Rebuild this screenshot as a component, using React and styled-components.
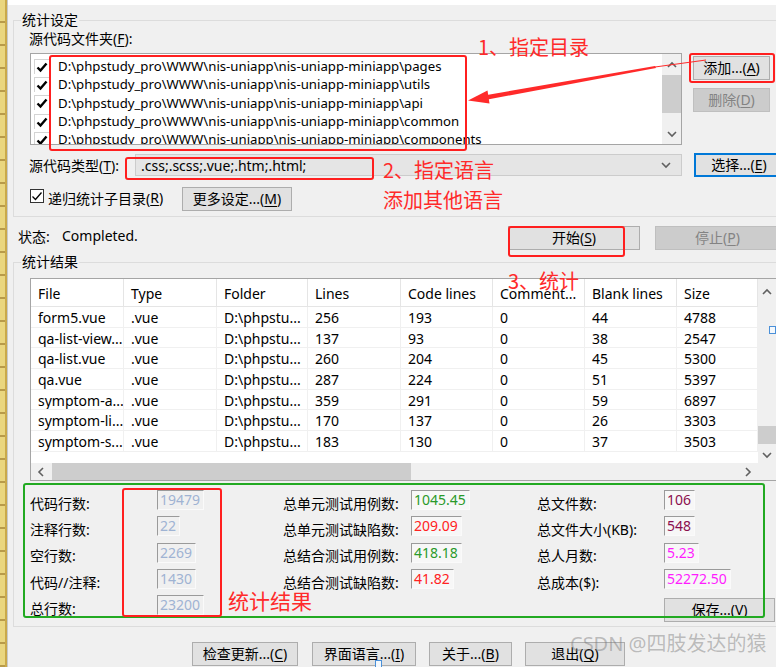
import React from 'react';
import styled, { createGlobalStyle } from 'styled-components';

const GlobalStyle = createGlobalStyle`
  html, body { margin: 0; padding: 0; background: #f0f0f0; }
  body {
    font-family: "Noto Sans", "Noto Sans CJK SC", sans-serif;
    font-size: 14px;
    color: #000;
  }
  * { box-sizing: border-box; }
`;

const Page = styled.div`
  position: relative;
  width: 776px;
  height: 667px;
  overflow: hidden;
  display: flex;
`;

const Strip = styled.div`
  flex: none;
  width: 8px;
  border-right: 1px solid #c8c8c8;
  background:
    linear-gradient(to right, transparent 0 5px, #c9a94b 5px 7px),
    repeating-linear-gradient(to bottom, #ead67f 0 21px, #b89a4a 21px 23px);
`;

const Window = styled.div`
  flex: 1;
  min-width: 0;
  display: flex;
  flex-direction: column;
  background: #f0f0f0;
`;

const TopBar = styled.div`
  flex: none;
  height: 5px;
  background: #fff;
`;

const GroupBox = styled.div`
  display: flex;
  flex-direction: column;
  margin: ${p => p.$top}px -40px 0 5px;
  padding: 0 0 ${p => p.$bottom}px 16px;
  border: 1px solid #dcdcdc;
`;

const GroupTitle = styled.div`
  align-self: flex-start;
  margin: -9px 0 0 -9px;
  padding: 0 1px;
  height: 16px;
  line-height: 16px;
  background: #f0f0f0;
`;

const FieldLabel = styled.div`
  margin: 2px 0 0 -1px;
  height: 18px;
  line-height: 18px;
`;

const Key = styled.span`
  text-decoration: underline;
  text-underline-offset: 2px;
`;

const ListRow = styled.div`
  display: flex;
  align-items: flex-start;
  margin-top: 5px;
`;

const ListBox = styled.div`
  flex: none;
  display: flex;
  width: 652px;
  height: 92px;
  background: #fff;
  border: 1px solid #a5a5a5;
`;

const ListItems = styled.div`
  flex: 1;
  overflow: hidden;
  padding: 3px 0 0 3px;
`;

const ListItem = styled.div`
  display: flex;
  align-items: center;
  height: 18.3px;
  font-size: 13.2px;
  white-space: nowrap;
`;

const Tick = styled.span`
  flex: none;
  display: flex;
  align-items: center;
  justify-content: center;
  width: 15px;
  height: 15px;
  margin-right: 9px;
  border-left: 1px solid #d4d4d4;
  border-top: 1px solid #d4d4d4;
`;

const VBar = styled.div`
  flex: none;
  display: flex;
  flex-direction: column;
  width: ${p => p.$w}px;
  padding-top: ${p => p.$pt || 0}px;
  background: #f0f0f0;
`;

const HBar = styled.div`
  display: flex;
  align-items: stretch;
  background: #f0f0f0;
`;

const Arrow = styled.div`
  flex: none;
  display: flex;
  align-items: center;
  justify-content: center;
  width: ${p => p.$w || 'auto'};
  height: ${p => p.$h || 'auto'};
`;

const Thumb = styled.div`
  flex: none;
  background: #cdcdcd;
  width: ${p => p.$w || 'auto'};
  height: ${p => p.$h || 'auto'};
  margin: ${p => p.$m || 0};
`;

const Spacer = styled.div`
  flex: 1;
`;

const SideButtons = styled.div`
  display: flex;
  flex-direction: column;
  gap: 8px;
  margin: 3px 0 0 11px;
`;

const Button = styled.button`
  flex: none;
  display: flex;
  align-items: center;
  justify-content: center;
  width: ${p => p.$w}px;
  height: 24px;
  margin: 0 0 0 ${p => p.$ml || 0}px;
  padding: 0;
  font: inherit;
  font-size: 14px;
  line-height: 1;
  white-space: nowrap;
  color: ${p => (p.disabled ? '#838383' : '#000')};
  background: ${p => (p.disabled ? '#cccccc' : '#e1e1e1')};
  border: 1px solid ${p => (p.$focus ? '#0078d7' : p.disabled ? '#bfbfbf' : '#adadad')};
  box-shadow: ${p => (p.$focus ? 'inset 0 0 0 1px #0078d7' : 'none')};
`;

const TypeRow = styled.div`
  display: flex;
  align-items: center;
  height: 24px;
  margin-top: 8px;
`;

const TypeLabel = styled.div`
  flex: none;
  width: 106px;
  margin-left: -1px;
`;

const Combo = styled.div`
  flex: none;
  display: flex;
  align-items: center;
  width: 547px;
  height: 22px;
  padding: 0 10px 0 5px;
  background: #e5e5e5;
  border: 1px solid #cccccc;
`;

const ComboText = styled.span`
  flex: 1;
`;

const CheckRow = styled.div`
  display: flex;
  align-items: center;
  height: 25px;
  margin-top: 9px;
`;

const CheckLabel = styled.label`
  flex: none;
  display: flex;
  align-items: center;
  width: 152px;
  margin-top: -2px;
`;

const CheckBox = styled.span`
  flex: none;
  display: flex;
  align-items: center;
  justify-content: center;
  width: 14px;
  height: 14px;
  margin: -3px 4px 0 0;
  border: 1px solid #333;
  background: #fff;
`;

const StatusRow = styled.div`
  display: flex;
  align-items: center;
  height: 25px;
  margin: 8px 0 0 10px;
`;

const StatusText = styled.div`
  flex: none;
  display: flex;
  width: 490px;
  margin-top: -3px;
`;

const StatusKey = styled.span`
  width: 44px;
`;

const ListView = styled.div`
  display: grid;
  grid-template-columns: 727px 18px;
  grid-template-rows: 184px 17px;
  width: 746px;
  height: 203px;
  margin-top: 8px;
  border: 1px solid #a5a5a5;
  border-right: none;
`;

const DataArea = styled.div`
  background: #fff;
  overflow: hidden;
`;

const GridRow = styled.div`
  display: flex;
  height: ${p => (p.$head ? '28px' : '20.7px')};
  border-bottom: 1px solid ${p => (p.$head ? '#e5e5e5' : '#f0f0f0')};
`;

const Cell = styled.div`
  flex: none;
  display: flex;
  align-items: center;
  width: ${p => p.$w}px;
  padding: ${p => (p.$head ? '2px' : '1px')} 0 0 7px;
  overflow: hidden;
  white-space: nowrap;
  border-right: 1px solid ${p => (p.$head ? '#e5e5e5' : '#f0f0f0')};
`;

const Corner = styled.div`
  background: #f0f0f0;
`;

const StatsGrid = styled.div`
  display: grid;
  grid-template-columns: 127px 126px 128px 126px 127px 120px;
  grid-template-rows: repeat(5, 26.3px);
  margin-top: 7px;
`;

const StatLabel = styled.div`
  display: flex;
  align-items: center;
  padding-top: 3px;
  white-space: nowrap;
`;

const StatCell = styled.div`
  display: flex;
  align-items: flex-start;
  padding-top: 2px;
`;

const ValueBox = styled.span`
  display: inline-flex;
  align-items: center;
  height: 20px;
  padding: 0 3px 0 2px;
  line-height: 1;
  color: ${p => p.$color};
  background: ${p => p.$bg || '#f7f7f7'};
  border: 1px solid;
  border-color: #9a9a9a #fafafa #fafafa #9a9a9a;
`;

const SaveCell = styled.div`
  padding-top: 5px;
`;

const BottomRow = styled.div`
  display: flex;
  margin: 15px 0 0 184px;
`;

/* annotation layer */
const Mark = styled.div`
  position: absolute;
  left: ${p => p.$x}px;
  top: ${p => p.$y}px;
  width: ${p => p.$w}px;
  height: ${p => p.$h}px;
  border: 2px solid ${p => p.$c || '#ff1f1f'};
  border-radius: 3px;
  pointer-events: none;
`;

const Note = styled.div`
  position: absolute;
  left: ${p => p.$x}px;
  top: ${p => p.$y}px;
  font-family: "Noto Sans CJK SC", sans-serif;
  font-size: ${p => p.$s || 20}px;
  line-height: 1;
  color: #ff2a2a;
  white-space: nowrap;
`;

const Watermark = styled.div`
  position: absolute;
  left: 570px;
  top: 634px;
  font-family: "Noto Sans", "Noto Sans CJK SC", sans-serif;
  font-size: 20px;
  line-height: 1;
  color: rgba(120, 120, 120, 0.45);
  white-space: nowrap;
`;

const Overlay = styled.svg`
  position: absolute;
  left: 0;
  top: 0;
  pointer-events: none;
`;

const Tiny = styled.div`
  position: absolute;
  left: ${p => p.$x}px;
  top: ${p => p.$y}px;
  width: 7px;
  height: 8px;
  border: 1px solid #4a90d9;
  background: #f4f8fc;
`;

const Chevron = ({ dir }) => {
  const pts = {
    up: '1,6 5,2 9,6',
    down: '1,2 5,6 9,2',
    left: '6,1 2,5 6,9',
    right: '2,1 6,5 2,9',
  }[dir];
  const w = dir === 'up' || dir === 'down' ? 10 : 8;
  const h = dir === 'up' || dir === 'down' ? 8 : 10;
  return (
    <svg width={w} height={h} viewBox={`0 0 ${w} ${h}`}>
      <polyline points={pts} fill="none" stroke="#606060" strokeWidth="1.6" />
    </svg>
  );
};

const CheckMark = ({ bold }) => (
  <svg width="12" height="12" viewBox="0 0 12 12">
    <polyline
      points="1.5,6.5 4.5,9.5 10.5,2.5"
      fill="none"
      stroke="#000"
      strokeWidth={bold ? 2.4 : 1.3}
    />
  </svg>
);

const folders = ['pages', 'utils', 'api', 'common', 'components'];

const columns = [
  ['File', 93],
  ['Type', 93],
  ['Folder', 91],
  ['Lines', 93],
  ['Code lines', 92],
  ['Comment...', 92],
  ['Blank lines', 92],
  ['Size', 81],
];

const rows = [
  ['form5.vue', '256', '193', '44', '4788'],
  ['qa-list-view...', '137', '93', '38', '2547'],
  ['qa-list.vue', '260', '204', '45', '5300'],
  ['qa.vue', '287', '224', '51', '5397'],
  ['symptom-a...', '359', '291', '59', '6897'],
  ['symptom-li...', '170', '137', '26', '3303'],
  ['symptom-s...', '183', '130', '37', '3503'],
];

const PALE = '#9fb3d3';
const GREEN = '#2a9a2a';
const RED = '#ff2222';
const PLUM = '#8b0f4e';
const PINK = '#ff1cff';

const stats = [
  ['代码行数:', '19479', '总单元测试用例数:', '1045.45', GREEN, '总文件数:', '106', PLUM],
  ['注释行数:', '22', '总单元测试缺陷数:', '209.09', RED, '总文件大小(KB):', '548', PLUM],
  ['空行数:', '2269', '总结合测试用例数:', '418.18', GREEN, '总人月数:', '5.23', PINK],
  ['代码//注释:', '1430', '总结合测试缺陷数:', '41.82', RED, '总成本($):', '52272.50', PINK],
];

export default function App() {
  return (
    <Page>
      <GlobalStyle />
      <Strip />
      <Window>
        <TopBar />

        <GroupBox $top={15} $bottom={5}>
          <GroupTitle>统计设定</GroupTitle>
          <FieldLabel>
            源代码文件夹(<Key>F</Key>):
          </FieldLabel>
          <ListRow>
            <ListBox>
              <ListItems>
                {folders.map(f => (
                  <ListItem key={f}>
                    <Tick>
                      <CheckMark bold />
                    </Tick>
                    D:\phpstudy_pro\WWW\nis-uniapp\nis-uniapp-miniapp\{f}
                  </ListItem>
                ))}
              </ListItems>
              <VBar $w={19}>
                <Arrow $h="21px">
                  <Chevron dir="up" />
                </Arrow>
                <Thumb $h="38px" />
                <Spacer />
                <Arrow $h="20px">
                  <Chevron dir="down" />
                </Arrow>
              </VBar>
            </ListBox>
            <SideButtons>
              <Button $w={77}>
                添加...(<Key>A</Key>)
              </Button>
              <Button $w={77} disabled>
                删除(<Key>D</Key>)
              </Button>
            </SideButtons>
          </ListRow>

          <TypeRow>
            <TypeLabel>
              源代码类型(<Key>T</Key>):
            </TypeLabel>
            <Combo>
              <ComboText>.css;.scss;.vue;.htm;.html;</ComboText>
              <Chevron dir="down" />
            </Combo>
            <Button $w={90} $ml={12} $focus>
              选择...(<Key>E</Key>)
            </Button>
          </TypeRow>

          <CheckRow>
            <CheckLabel>
              <CheckBox>
                <CheckMark />
              </CheckBox>
              递归统计子目录(<Key>R</Key>)
            </CheckLabel>
            <Button $w={110}>
              更多设定...(<Key>M</Key>)
            </Button>
          </CheckRow>
        </GroupBox>

        <StatusRow>
          <StatusText>
            <StatusKey>状态:</StatusKey>
            <span>Completed.</span>
          </StatusText>
          <Button $w={132}>
            开始(<Key>S</Key>)
          </Button>
          <Button $w={125} $ml={15} disabled>
            停止(<Key>P</Key>)
          </Button>
        </StatusRow>

        <GroupBox $top={12} $bottom={7}>
          <GroupTitle>统计结果</GroupTitle>
          <ListView>
            <DataArea>
              <GridRow $head>
                {columns.map(([name, w]) => (
                  <Cell key={name} $w={w} $head>
                    {name}
                  </Cell>
                ))}
              </GridRow>
              {rows.map(([file, lines, code, blank, size]) => (
                <GridRow key={file}>
                  {[file, '.vue', 'D:\\phpstu...', lines, code, '0', blank, size].map((v, i) => (
                    <Cell key={i} $w={columns[i][1]}>
                      {v}
                    </Cell>
                  ))}
                </GridRow>
              ))}
            </DataArea>
            <VBar $w={18} $pt={4}>
              <Arrow $h="17px">
                <Chevron dir="up" />
              </Arrow>
              <Spacer />
              <Thumb $h="18px" $m="0 0 2px 0" />
              <Arrow $h="17px">
                <Chevron dir="down" />
              </Arrow>
            </VBar>
            <HBar>
              <Arrow $w="20px">
                <Chevron dir="left" />
              </Arrow>
              <Thumb $w="359px" $m="0 0 0 1px" />
              <Spacer />
              <Arrow $w="20px">
                <Chevron dir="right" />
              </Arrow>
            </HBar>
            <Corner />
          </ListView>

          <StatsGrid>
            {stats.map(([l1, v1, l2, v2, c2, l3, v3, c3]) => (
              <React.Fragment key={l1}>
                <StatLabel>{l1}</StatLabel>
                <StatCell>
                  <ValueBox $color={PALE} $bg="#f0f0f0">
                    {v1}
                  </ValueBox>
                </StatCell>
                <StatLabel>{l2}</StatLabel>
                <StatCell>
                  <ValueBox $color={c2}>{v2}</ValueBox>
                </StatCell>
                <StatLabel>{l3}</StatLabel>
                <StatCell>
                  <ValueBox $color={c3}>{v3}</ValueBox>
                </StatCell>
              </React.Fragment>
            ))}
            <StatLabel>总行数:</StatLabel>
            <StatCell>
              <ValueBox $color={PALE} $bg="#f0f0f0">
                23200
              </ValueBox>
            </StatCell>
            <div />
            <div />
            <div />
            <SaveCell>
              <Button $w={111}>
                保存...(<Key>V</Key>)
              </Button>
            </SaveCell>
          </StatsGrid>
        </GroupBox>

        <BottomRow>
          <Button $w={106}>
            检查更新...(<Key>C</Key>)
          </Button>
          <Button $w={104} $ml={14}>
            界面语言...(<Key>I</Key>)
          </Button>
          <Button $w={83} $ml={13}>
            关于...(<Key>B</Key>)
          </Button>
          <Button $w={100} $ml={13}>
            退出(<Key>Q</Key>)
          </Button>
        </BottomRow>
      </Window>

      {/* annotations drawn over the dialog */}
      <Mark $x={49} $y={55} $w={418} $h={96} />
      <Mark $x={689} $y={53} $w={86} $h={30} />
      <Mark $x={125} $y={157} $w={249} $h={23} />
      <Mark $x={508} $y={226} $w={117} $h={31} />
      <Mark $x={23} $y={483} $w={742} $h={135} $c="#22aa22" />
      <Mark $x={122} $y={488} $w={100} $h={129} />

      <Note $x={478} $y={37}>1、指定目录</Note>
      <Note $x={383} $y={160}>2、指定语言</Note>
      <Note $x={383} $y={190}>添加其他语言</Note>
      <Note $x={508} $y={271}>3、统计</Note>
      <Note $x={228} $y={590} $s={21}>
        统计结果
      </Note>

      <Overlay width="776" height="667" viewBox="0 0 776 667">
        <line x1="655" y1="67" x2="706" y2="60" stroke="#ff2a2a" strokeWidth="1" />
        <polygon points="484,95.5 655,66 656,68 485,100" fill="#ff2a2a" />
        <polygon points="468,100.5 487.5,90.5 489.5,103.5" fill="#ff2a2a" />
      </Overlay>

      <Watermark>CSDN @四肢发达的猿</Watermark>
      <Tiny $x={769} $y={326} />
      <Tiny $x={375} $y={660} />
    </Page>
  );
}
